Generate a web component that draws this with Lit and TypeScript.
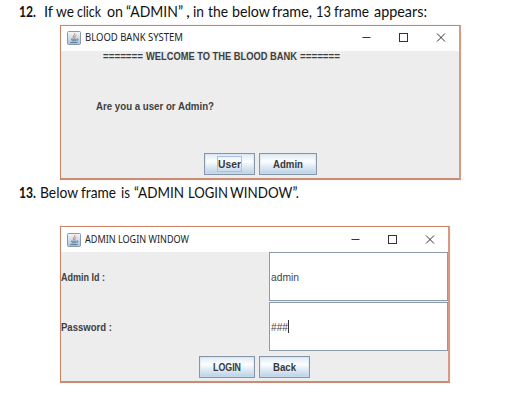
import { LitElement, html, css, svg } from "lit";
import { customElement, property } from "lit/decorators.js";

/** A run of words: text, start and width along the line. */
type Run = [string, number, number];

/** One line of text, set to exact advance widths. */
@customElement("fit-line")
class FitLine extends LitElement {
  @property() text = "";
  @property({ type: Number }) width = 100;
  @property({ attribute: false }) runs: Run[] = [];
  static styles = css`
    :host { display: block; flex: none; height: 20px; }
    svg { display: block; overflow: visible; }
    text { fill: currentColor; }
  `;
  render() {
    const runs: Run[] = this.runs.length ? this.runs : [[this.text, 0, this.width]];
    return html`<svg width=${this.width} height="20">
      ${svg`<text y="15">${runs.map(([t, x, w]) => svg`<tspan x=${x} textLength=${w} lengthAdjust="spacingAndGlyphs">${t}</tspan>`)}</text>`}
    </svg>`;
  }
}

@customElement("swing-window")
class SwingWindow extends LitElement {
  @property() heading = "";
  @property({ type: Number }) headingWidth = 100;
  static styles = css`
    :host {
      display: flex; flex-direction: column; box-sizing: border-box;
      border: 1px solid #cb8467; border-right: 2px solid #d69a82; border-bottom: 2px solid #c78d76;
      box-shadow: 0 0 1px #e9c9bb; background: #ededed;
    }
    .bar { display: flex; box-sizing: border-box; height: 25px; flex: none; background: #fff; padding-top: var(--bar-inset, 0); }
    .logo { flex: none; margin: 5px 4px 0 6px; }
    fit-line { font: 11px "Noto Sans", "Open Sans", sans-serif; color: #222; }
    .controls { margin-left: auto; flex: none; }
    .body { flex: 1; display: flex; flex-direction: column; min-height: 0; }
  `;
  render() {
    return html`
      <div class="bar">
        <svg class="logo" width="14" height="14" viewBox="0 0 14 14" fill="none">
          <defs><linearGradient id="g" x1="0" y1="0" x2="0" y2="1">
            <stop offset="0" stop-color="#f4f7fa" /><stop offset="1" stop-color="#a9c3d8" />
          </linearGradient></defs>
          <rect x=".5" y=".5" width="13" height="13" rx="1" fill="url(#g)" stroke="#8799ab" />
          <path d="M7.6 2.2C8.6 4 5 4.6 6.8 7.2M9.3 4.3C7.4 5.2 7.5 6 8 7" stroke="#d87848" />
          <path d="M4 8.2h5.6M4.6 9.8h4.6M3.2 11.6h7.4M9.8 8c1.8-.4 1.6 1.6-.2 1.8" stroke="#5c7c9c" />
        </svg>
        <fit-line .text=${this.heading} .width=${this.headingWidth}></fit-line>
        <svg class="controls" width="98" height="24" fill="none" stroke="#333">
          <path d="M1.5 11.5h8" />
          <rect x="38.5" y="7.5" width="8" height="8" />
          <path d="M76 7.5l8 8M84 7.5l-8 8" />
        </svg>
      </div>
      <div class="body"><slot></slot></div>`;
  }
}

const introRuns: Run[] = [
  ["If", 0, 9], ["we", 12, 18], ["click", 33, 24], ["on", 63, 16], ["“ADMIN”", 82, 57], [",", 142, 4],
  ["in", 149, 11], ["the", 164, 20], ["below", 188, 38], ["frame,", 228, 40], ["13", 272, 15],
  ["frame", 290, 35], ["appears:", 330, 53],
];
const belowRuns: Run[] = [
  ["Below", 0, 38], ["frame", 41, 35], ["is", 81, 9], ["“ADMIN", 94, 50], ["LOGIN", 148, 40], ["WINDOW”.", 190, 69],
];
const welcomeRuns: Run[] = [["=======", 0, 40], ["WELCOME TO THE BLOOD BANK", 43, 151], ["=======", 197, 40]];

@customElement("app-root")
class AppRoot extends LitElement {
  static styles = css`
    :host { display: block; box-sizing: border-box; width: 516px; height: 412px; background: #fff; overflow: hidden; }
    .para { display: flex; height: 20px; padding-left: 19px; font: 15px Lato, sans-serif; color: #111; }
    .num { font-weight: 700; }
    .first { padding-top: 2px; margin-bottom: 3px; }
    .first .num { margin-right: 8px; }
    .second { margin: 3px 0 23px; }
    .second .num { margin-right: 4px; }
    swing-window { margin-left: 60px; }
    .choice { width: 401px; height: 155px; }
    .login { width: 390px; height: 157px; --bar-inset: 1px; }
    .label { font: bold 10.5px "Liberation Sans", Arial, sans-serif; color: #404040; }
    .welcome { margin: -6px 0 0 42px; }
    .question { margin: 30px 0 0 35px; }
    .buttons { display: flex; gap: 4px; }
    .choice .buttons { margin: 38px 0 0 143px; }
    .login .buttons { margin: 4px 0 0 138px; }
    .btn {
      display: flex; justify-content: center; box-sizing: border-box; height: 22px; border: 1px solid #8795a6;
      background: linear-gradient(#dfeaf4, #fdfeff 38%, #e8f0f8 55%, #b9d1e6);
      box-shadow: inset 0 0 0 1px #cfdfee80;
      font: bold 10.5px "Liberation Sans", Arial, sans-serif; color: #383838;
    }
    .btn > fit-line { margin-top: -1px; }
    .focus { outline: 1px solid #a9c1dc; height: 14px; margin-top: 3px; }
    .focus fit-line { margin-top: -4px; }
    .user { width: 51px; } .admin { width: 58px; } .go { width: 56px; } .back { width: 51px; }
    .row { display: flex; height: 49px; margin-bottom: 1px; }
    .row .label { margin-top: 14px; }
    .name { width: 208px; }
    .field { display: flex; box-sizing: border-box; width: 179px; background: #fff; border: 1px solid #8c9bab; padding: 13px 0 0 1px;
      font: 10.5px "Liberation Sans", Arial, sans-serif; color: #444; }
    .caret { width: 1px; height: 13px; background: #333; margin-top: 4px; }
  `;
  render() {
    return html`
      <div class="para first">
        <fit-line class="num" .text=${"12."} .width=${17}></fit-line>
        <fit-line .runs=${introRuns} .width=${383}></fit-line>
      </div>
      <swing-window class="choice" .heading=${"BLOOD BANK SYSTEM"} .headingWidth=${98}>
        <fit-line class="label welcome" .runs=${welcomeRuns} .width=${237}></fit-line>
        <fit-line class="label question" .text=${"Are you a user or Admin?"} .width=${118}></fit-line>
        <div class="buttons">
          <div class="btn user"><div class="focus"><fit-line .text=${"User"} .width=${23}></fit-line></div></div>
          <div class="btn admin"><fit-line .text=${"Admin"} .width=${30}></fit-line></div>
        </div>
      </swing-window>
      <div class="para second">
        <fit-line class="num" .text=${"13."} .width=${17}></fit-line>
        <fit-line .runs=${belowRuns} .width=${259}></fit-line>
      </div>
      <swing-window class="login" .heading=${"ADMIN LOGIN WINDOW"} .headingWidth=${104}>
        <div class="row">
          <div class="name"><fit-line class="label" .text=${"Admin Id :"} .width=${44}></fit-line></div>
          <div class="field"><fit-line .text=${"admin"} .width=${28}></fit-line></div>
        </div>
        <div class="row">
          <div class="name"><fit-line class="label" .text=${"Password :"} .width=${51}></fit-line></div>
          <div class="field"><fit-line .text=${"###"} .width=${17}></fit-line><span class="caret"></span></div>
        </div>
        <div class="buttons">
          <div class="btn go"><fit-line .text=${"LOGIN"} .width=${28}></fit-line></div>
          <div class="btn back"><fit-line .text=${"Back"} .width=${23}></fit-line></div>
        </div>
      </swing-window>`;
  }
}
